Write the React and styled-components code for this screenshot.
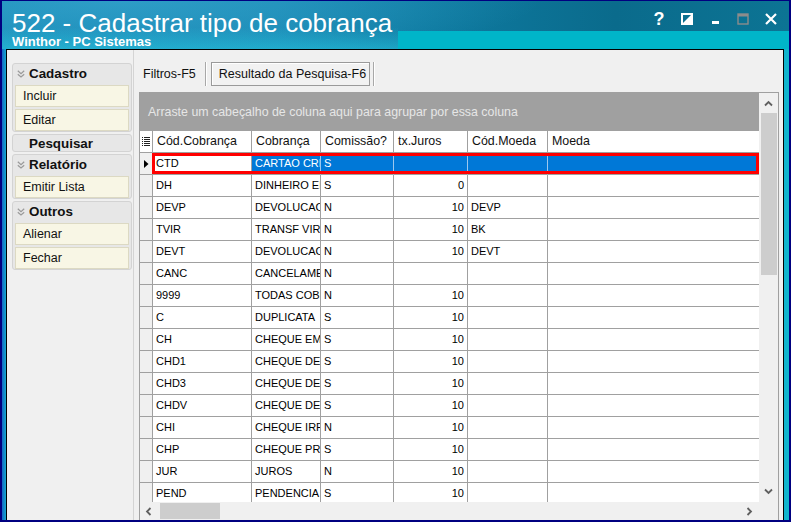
import React from 'react';
import styled, { createGlobalStyle } from 'styled-components';

const UI = '"Liberation Sans", Arial, sans-serif';

const GlobalStyle = createGlobalStyle`
  html, body { margin: 0; padding: 0; background: #fff; }
  body { font-family: ${UI}; color: #000; }
  *, *::before, *::after { box-sizing: border-box; }
`;

const Window = styled.div`
  width: 791px;
  height: 522px;
  display: flex;
  flex-direction: column;
  border: 2px solid #000080;
  border-top-width: 1px;
  background: linear-gradient(90deg, #1766c4 0px, #12a9d0 4px, #10b4cc 100%);
  overflow: hidden;
`;

const TitleBar = styled.div`
  height: 48px;
  flex: none;
  display: flex;
  justify-content: space-between;
  align-items: flex-start;
  background:
    linear-gradient(#00b5c9, #00b5c9) right bottom / calc(100% - 396px) 18px no-repeat,
    linear-gradient(180deg, rgba(255,255,255,0) 55%, rgba(40,200,225,0.55) 100%) left bottom / 396px 100% no-repeat,
    radial-gradient(ellipse 420px 60px at 15% 0%, rgba(60,170,210,0.6), rgba(60,170,210,0) 100%),
    linear-gradient(90deg, #1a8cb8 0%, #1787b2 35%, #0e7aa0 55%, #0a6b8c 78%, #0c7494 100%);
`;

const TitleBlock = styled.div`
  padding: 11px 0 0 10px;
  color: #fff;
  display: flex;
  flex-direction: column;
`;

const Title = styled.div`
  font-family: ${UI};
  font-size: 26px;
  line-height: 23px;
  white-space: nowrap;
`;

const Subtitle = styled.div`
  font-family: ${UI};
  font-weight: bold;
  font-size: 13px;
  line-height: 13px;
  white-space: nowrap;
`;

const Controls = styled.div`
  display: flex;
  padding: 10px 4px 0 0;
`;

const CtlButton = styled.div`
  width: 28px;
  height: 16px;
  display: flex;
  align-items: center;
  justify-content: center;
  color: #fff;
  font-family: ${UI};
  font-weight: bold;
  font-size: 18px;
`;

const Client = styled.div`
  flex: 1;
  min-height: 0;
  margin: 0 5px 0 4px;
  border: 1px solid #000;
  border-bottom: none;
  background: #f0f0f0;
  display: flex;
`;

const LeftPanel = styled.div`
  width: 127px;
  flex: none;
  border-right: 1px solid #d4d4d4;
  padding: 13px 1px 0 5px;
  display: flex;
  flex-direction: column;
  gap: 2px;
`;

const Group = styled.div`
  border: 1px solid #d3d3d3;
  border-radius: 3px;
  background: #e7e7e7;
  padding: 0 2px;
  display: flex;
  flex-direction: column;
`;

const GroupHeader = styled.div`
  height: ${p => (p.$plain ? '16px' : '21px')};
  display: flex;
  align-items: center;
  gap: 4px;
  padding: 0 0 ${p => (p.$plain ? '0' : '2px')} ${p => (p.$plain ? '14px' : '2px')};
  font-family: ${UI};
  font-weight: bold;
  font-size: 13.4px;
  color: #111;
`;

const ButtonList = styled.div`
  display: flex;
  flex-direction: column;
  gap: 2px;
`;

const SideButton = styled.div`
  height: 22px;
  border: 1px solid #dcd9c3;
  background: #f8f6e5;
  display: flex;
  align-items: center;
  padding-left: 7px;
  font-family: ${UI};
  font-size: 12.5px;
  color: #111;
`;

const RightPanel = styled.div`
  flex: 1;
  min-width: 0;
  display: flex;
  flex-direction: column;
  padding: 12px 4px 0 5px;
`;

const TabStrip = styled.div`
  height: 24px;
  flex: none;
  display: flex;
  align-items: stretch;
  margin-bottom: 6px;
  font-family: ${UI};
  font-size: 12.5px;
`;

const Tab = styled.div`
  display: flex;
  align-items: center;
  padding: 0 9px 0 4px;
  color: #111;
`;

const ActiveTab = styled.div`
  width: 159px;
  display: flex;
  align-items: center;
  padding-left: 7px;
  border: 1px solid #9a9a9a;
  box-shadow: inset 1px 1px 0 #fff;
  background: #f2f2f2;
  color: #111;
  white-space: nowrap;
`;

const TabSep = styled.div`
  width: 2px;
  border-left: 1px solid #a8a8a8;
  border-right: 1px solid #fff;
  margin: 0 ${p => p.$right || 0}px 0 ${p => p.$left || 0}px;
`;

const Grid = styled.div`
  flex: 1;
  min-height: 0;
  display: flex;
  flex-direction: column;
  border: 1px solid #a0a0a0;
  border-bottom: none;
  background: #fff;
`;

const GridBody = styled.div`
  flex: 1;
  min-height: 0;
  display: flex;
`;

const GridMain = styled.div`
  flex: 1;
  min-width: 0;
  display: flex;
  flex-direction: column;
  overflow: hidden;
`;

const GroupPanel = styled.div`
  height: 38px;
  flex: none;
  background: #a0a0a0;
  color: #e6e6e6;
  font-family: ${UI};
  font-size: 12.4px;
  display: flex;
  align-items: center;
  padding-left: 8px;
  white-space: nowrap;
`;

const COLS = '13px 99px 69px 73px 74px 80px 1fr';

const Row = styled.div`
  display: grid;
  grid-template-columns: ${COLS};
  height: 22px;
  flex: none;
  position: relative;
`;

const HeadCell = styled.div`
  border-right: ${p => (p.$last ? 'none' : '1px solid #a0a0a0')};
  border-bottom: 1px solid #a0a0a0;
  padding-left: 4px;
  font-family: ${UI};
  font-size: 12.4px;
  line-height: 21px;
  color: #111;
  white-space: nowrap;
  overflow: hidden;
  display: flex;
  align-items: center;
`;

const IndicatorCell = styled.div`
  background: ${p => (p.$head ? '#fff' : '#f0f0f0')};
  border-right: 1px solid #a0a0a0;
  border-bottom: 1px solid #a0a0a0;
  display: flex;
  align-items: center;
  justify-content: center;
`;

const Cell = styled.div`
  border-right: ${p =>
    p.$last ? 'none' : p.$sel ? '1px solid #9cc7ee' : '1px solid #a0a0a0'};
  border-bottom: 1px solid #a0a0a0;
  background: ${p => (p.$sel ? '#0078d7' : '#fff')};
  color: ${p => (p.$sel ? '#fff' : '#000')};
  padding: 0 ${p => (p.$right ? '3px' : '0')} 0 3px;
  text-align: ${p => (p.$right ? 'right' : 'left')};
  font-family: ${UI};
  font-size: 11px;
  line-height: 21px;
  white-space: nowrap;
  overflow: hidden;
`;

const SelectionFrame = styled.div`
  position: absolute;
  left: 12px;
  right: 0;
  top: 0;
  height: 21px;
  border: 3px solid #f00;
  pointer-events: none;
`;

const VScroll = styled.div`
  width: 19px;
  flex: none;
  background: #f0f0f0;
  display: flex;
  flex-direction: column;
`;

const ScrollBtn = styled.div`
  flex: none;
  width: ${p => p.$w || '100%'};
  height: ${p => p.$h || '100%'};
  display: flex;
  align-items: center;
  justify-content: center;
`;

const VTrack = styled.div`
  flex: 1;
  padding: 0 1px 0 2px;
`;

const VThumb = styled.div`
  height: 162px;
  background: #cdcdcd;
`;

const HScrollRow = styled.div`
  height: 18px;
  flex: none;
  display: flex;
  background: #f0f0f0;
`;

const HScroll = styled.div`
  flex: 1;
  display: flex;
  align-items: stretch;
`;

const HTrack = styled.div`
  flex: 1;
  padding: 1px 0 1px 3px;
`;

const HThumb = styled.div`
  width: 60px;
  height: 100%;
  background: #cdcdcd;
`;

const Corner = styled.div`
  width: 19px;
  flex: none;
`;

const Chevron = ({ dir = 'up' }) => {
  const rot = { up: 0, down: 180, left: -90, right: 90 }[dir];
  return (
    <svg width="9" height="9" viewBox="0 0 9 9" style={{ transform: `rotate(${rot}deg)` }}>
      <polyline points="1,6.5 4.5,3 8,6.5" fill="none" stroke="#606060" strokeWidth="1.8" />
    </svg>
  );
};

const DoubleChevron = () => (
  <svg width="8" height="8" viewBox="0 0 8 8">
    <polyline points="0.8,0.8 4,3.6 7.2,0.8" fill="none" stroke="#9a9a9a" strokeWidth="1.2" />
    <polyline points="0.8,4.2 4,7 7.2,4.2" fill="none" stroke="#9a9a9a" strokeWidth="1.2" />
  </svg>
);

const ListIcon = () => (
  <svg width="8" height="9" viewBox="0 0 8 9">
    {[0, 2, 4, 6, 8].map(y => (
      <g key={y}>
        <rect x="0" y={y} width="1" height="1" fill="#222" />
        <rect x="2" y={y} width="6" height="1" fill="#222" />
      </g>
    ))}
  </svg>
);

const RowArrow = () => (
  <svg width="5" height="8" viewBox="0 0 5 8">
    <polygon points="0,0 4.5,4 0,8" fill="#000" />
  </svg>
);

const HalfSquareIcon = () => (
  <svg width="12" height="12" viewBox="0 0 12 12">
    <rect x="1" y="1" width="10" height="10" fill="none" stroke="#fff" strokeWidth="2" />
    <polygon points="11,1 11,11 1,11" fill="#fff" />
  </svg>
);

const MinIcon = () => (
  <svg width="12" height="12" viewBox="0 0 12 12">
    <rect x="3" y="8" width="7" height="3" fill="#fff" />
  </svg>
);

const MaxIcon = () => (
  <svg width="12" height="12" viewBox="0 0 12 12">
    <rect x="1" y="1" width="10" height="10" fill="none" stroke="#8c8c8c" strokeWidth="1.4" />
    <rect x="1" y="1" width="10" height="2.5" fill="#8c8c8c" />
  </svg>
);

const CloseIcon = () => (
  <svg width="12" height="12" viewBox="0 0 12 12">
    <path d="M1 1 L11 11 M11 1 L1 11" stroke="#fff" strokeWidth="2.2" />
  </svg>
);

const columns = ['Cód.Cobrança', 'Cobrança', 'Comissão?', 'tx.Juros', 'Cód.Moeda', 'Moeda'];

const rows = [
  ['CTD', 'CARTAO CREDITO', 'S', '', '', ''],
  ['DH', 'DINHEIRO EM ESPECIE', 'S', '0', '', ''],
  ['DEVP', 'DEVOLUCAO', 'N', '10', 'DEVP', ''],
  ['TVIR', 'TRANSF VIRTUAL', 'N', '10', 'BK', ''],
  ['DEVT', 'DEVOLUCAO', 'N', '10', 'DEVT', ''],
  ['CANC', 'CANCELAMENTO', 'N', '', '', ''],
  ['9999', 'TODAS COBRANCAS', 'N', '10', '', ''],
  ['C', 'DUPLICATA', 'S', '10', '', ''],
  ['CH', 'CHEQUE EM DIA', 'S', '10', '', ''],
  ['CHD1', 'CHEQUE DEVOLVIDO', 'S', '10', '', ''],
  ['CHD3', 'CHEQUE DEVOLVIDO', 'S', '10', '', ''],
  ['CHDV', 'CHEQUE DEVOLVIDO', 'S', '10', '', ''],
  ['CHI', 'CHEQUE IRREGULAR', 'N', '10', '', ''],
  ['CHP', 'CHEQUE PRE', 'S', '10', '', ''],
  ['JUR', 'JUROS', 'N', '10', '', ''],
  ['PEND', 'PENDENCIA', 'S', '10', '', ''],
];

const groups = [
  { title: 'Cadastro', items: ['Incluir', 'Editar'] },
  { title: 'Pesquisar', plain: true, items: [] },
  { title: 'Relatório', items: ['Emitir Lista'] },
  { title: 'Outros', items: ['Alienar', 'Fechar'] },
];

export default function App() {
  return (
    <>
      <GlobalStyle />
      <Window>
        <TitleBar>
          <TitleBlock>
            <Title>522 - Cadastrar tipo de cobrança</Title>
            <Subtitle>Winthor - PC Sistemas</Subtitle>
          </TitleBlock>
          <Controls>
            <CtlButton>?</CtlButton>
            <CtlButton><HalfSquareIcon /></CtlButton>
            <CtlButton><MinIcon /></CtlButton>
            <CtlButton><MaxIcon /></CtlButton>
            <CtlButton><CloseIcon /></CtlButton>
          </Controls>
        </TitleBar>
        <Client>
          <LeftPanel>
            {groups.map(g => (
              <Group key={g.title}>
                <GroupHeader $plain={g.plain}>
                  {!g.plain && <DoubleChevron />}
                  {g.title}
                </GroupHeader>
                {g.items.length > 0 && (
                  <ButtonList>
                    {g.items.map(it => (
                      <SideButton key={it}>{it}</SideButton>
                    ))}
                  </ButtonList>
                )}
              </Group>
            ))}
          </LeftPanel>
          <RightPanel>
            <TabStrip>
              <Tab>Filtros-F5</Tab>
              <TabSep $right={4} />
              <ActiveTab>Resultado da Pesquisa-F6</ActiveTab>
              <TabSep $left={3} />
            </TabStrip>
            <Grid>
              <GridBody>
                <GridMain>
                  <GroupPanel>Arraste um cabeçalho de coluna aqui para agrupar por essa coluna</GroupPanel>
                  <Row>
                    <IndicatorCell $head><ListIcon /></IndicatorCell>
                    {columns.map((c, i) => (
                      <HeadCell key={c} $last={i === columns.length - 1}>{c}</HeadCell>
                    ))}
                  </Row>
                  {rows.map((r, ri) => {
                    const selected = ri === 0;
                    return (
                      <Row key={r[0]}>
                        <IndicatorCell>{selected && <RowArrow />}</IndicatorCell>
                        {r.map((v, ci) => (
                          <Cell
                            key={ci}
                            $sel={selected && ci > 0}
                            $right={ci === 3}
                            $last={ci === r.length - 1}
                          >
                            {v}
                          </Cell>
                        ))}
                        {selected && <SelectionFrame />}
                      </Row>
                    );
                  })}
                </GridMain>
                <VScroll>
                  <ScrollBtn $h="20px"><Chevron dir="up" /></ScrollBtn>
                  <VTrack><VThumb /></VTrack>
                  <ScrollBtn $h="21px"><Chevron dir="down" /></ScrollBtn>
                </VScroll>
              </GridBody>
              <HScrollRow>
                <HScroll>
                  <ScrollBtn $w="17px"><Chevron dir="left" /></ScrollBtn>
                  <HTrack><HThumb /></HTrack>
                  <ScrollBtn $w="19px"><Chevron dir="right" /></ScrollBtn>
                </HScroll>
                <Corner />
              </HScrollRow>
            </Grid>
          </RightPanel>
        </Client>
      </Window>
    </>
  );
}
